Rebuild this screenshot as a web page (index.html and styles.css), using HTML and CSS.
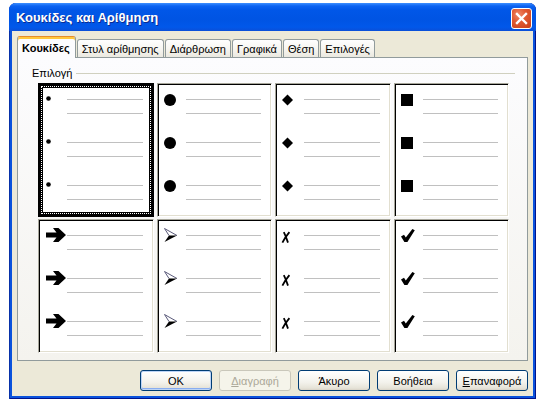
FILE: index.html
```html
<!DOCTYPE html>
<html lang="el">
<head>
<meta charset="utf-8">
<title>Κουκίδες και Αρίθμηση</title>
<link rel="stylesheet" href="styles.css">
</head>
<body>
<div class="window">
  <div class="titlebar">
    <span class="title">Κουκίδες και Αρίθμηση</span>
    <span class="close"><svg width="19" height="19" viewBox="0 0 19 19"><path d="M5 5 L14 14 M14 5 L5 14" stroke="#fff" stroke-width="2.4" stroke-linecap="square"/></svg></span>
  </div>
  <div class="client">
    <div class="tabs">
      <div class="tab active">Κουκίδες</div>
      <div class="tab">Στυλ αρίθμησης</div>
      <div class="tab">Διάρθρωση</div>
      <div class="tab">Γραφικά</div>
      <div class="tab">Θέση</div>
      <div class="tab">Επιλογές</div>
    </div>
    <div class="panel">
      <div class="group-head"><span class="group-label">Επιλογή</span><span class="rule"></span></div>
      <div class="grid">
        <!-- row 1 -->
        <div class="cell selected">
          <div class="g"><div class="mk"><svg width="22" height="14" viewBox="0 0 22 14"><circle cx="3.5" cy="6.5" r="2.3" fill="#000"/></svg></div><div class="ls"><i></i><i></i></div></div>
          <div class="g"><div class="mk"><svg width="22" height="14" viewBox="0 0 22 14"><circle cx="3.5" cy="6.5" r="2.3" fill="#000"/></svg></div><div class="ls"><i></i><i></i></div></div>
          <div class="g"><div class="mk"><svg width="22" height="14" viewBox="0 0 22 14"><circle cx="3.5" cy="6.5" r="2.3" fill="#000"/></svg></div><div class="ls"><i></i><i></i></div></div>
        </div>
        <div class="cell">
          <div class="g"><div class="mk"><svg width="22" height="14" viewBox="0 0 22 14"><circle cx="6" cy="8" r="6" fill="#000"/></svg></div><div class="ls"><i></i><i></i></div></div>
          <div class="g"><div class="mk"><svg width="22" height="14" viewBox="0 0 22 14"><circle cx="6" cy="8" r="6" fill="#000"/></svg></div><div class="ls"><i></i><i></i></div></div>
          <div class="g"><div class="mk"><svg width="22" height="14" viewBox="0 0 22 14"><circle cx="6" cy="8" r="6" fill="#000"/></svg></div><div class="ls"><i></i><i></i></div></div>
        </div>
        <div class="cell">
          <div class="g"><div class="mk"><svg width="22" height="14" viewBox="0 0 22 14"><polygon points="5.5,2.5 11,8 5.5,13.5 0,8" fill="#000"/></svg></div><div class="ls"><i></i><i></i></div></div>
          <div class="g"><div class="mk"><svg width="22" height="14" viewBox="0 0 22 14"><polygon points="5.5,2.5 11,8 5.5,13.5 0,8" fill="#000"/></svg></div><div class="ls"><i></i><i></i></div></div>
          <div class="g"><div class="mk"><svg width="22" height="14" viewBox="0 0 22 14"><polygon points="5.5,2.5 11,8 5.5,13.5 0,8" fill="#000"/></svg></div><div class="ls"><i></i><i></i></div></div>
        </div>
        <div class="cell">
          <div class="g"><div class="mk"><svg width="22" height="14" viewBox="0 0 22 14"><rect x="0" y="2" width="12" height="12" fill="#000"/></svg></div><div class="ls"><i></i><i></i></div></div>
          <div class="g"><div class="mk"><svg width="22" height="14" viewBox="0 0 22 14"><rect x="0" y="2" width="12" height="12" fill="#000"/></svg></div><div class="ls"><i></i><i></i></div></div>
          <div class="g"><div class="mk"><svg width="22" height="14" viewBox="0 0 22 14"><rect x="0" y="2" width="12" height="12" fill="#000"/></svg></div><div class="ls"><i></i><i></i></div></div>
        </div>
        <!-- row 2 -->
        <div class="cell">
          <div class="g"><div class="mk"><svg width="22" height="14" viewBox="0 0 22 14"><polygon points="1,4.5 11.5,4.5 8,0 13.5,0 21,7 13.5,14 8,14 11.5,9.5 1,9.5" fill="#000"/></svg></div><div class="ls"><i></i><i></i></div></div>
          <div class="g"><div class="mk"><svg width="22" height="14" viewBox="0 0 22 14"><polygon points="1,4.5 11.5,4.5 8,0 13.5,0 21,7 13.5,14 8,14 11.5,9.5 1,9.5" fill="#000"/></svg></div><div class="ls"><i></i><i></i></div></div>
          <div class="g"><div class="mk"><svg width="22" height="14" viewBox="0 0 22 14"><polygon points="1,4.5 11.5,4.5 8,0 13.5,0 21,7 13.5,14 8,14 11.5,9.5 1,9.5" fill="#000"/></svg></div><div class="ls"><i></i><i></i></div></div>
        </div>
        <div class="cell">
          <div class="g"><div class="mk"><svg width="22" height="14" viewBox="0 0 22 14"><polyline points="5,7.5 0.5,0.5 13,7.5" fill="none" stroke="#5a5a7a" stroke-width="1"/><polygon points="5,7.5 13,7.5 0.5,14" fill="#000"/></svg></div><div class="ls"><i></i><i></i></div></div>
          <div class="g"><div class="mk"><svg width="22" height="14" viewBox="0 0 22 14"><polyline points="5,7.5 0.5,0.5 13,7.5" fill="none" stroke="#5a5a7a" stroke-width="1"/><polygon points="5,7.5 13,7.5 0.5,14" fill="#000"/></svg></div><div class="ls"><i></i><i></i></div></div>
          <div class="g"><div class="mk"><svg width="22" height="14" viewBox="0 0 22 14"><polyline points="5,7.5 0.5,0.5 13,7.5" fill="none" stroke="#5a5a7a" stroke-width="1"/><polygon points="5,7.5 13,7.5 0.5,14" fill="#000"/></svg></div><div class="ls"><i></i><i></i></div></div>
        </div>
        <div class="cell">
          <div class="g"><div class="mk"><svg class="ovf" width="22" height="14" viewBox="0 0 22 14"><path d="M1.8 4.2 Q3.8 8 6 14.6 M7.4 4.2 Q3.4 9 0.4 14.6" fill="none" stroke="#000" stroke-width="1.8"/></svg></div><div class="ls"><i></i><i></i></div></div>
          <div class="g"><div class="mk"><svg class="ovf" width="22" height="14" viewBox="0 0 22 14"><path d="M1.8 4.2 Q3.8 8 6 14.6 M7.4 4.2 Q3.4 9 0.4 14.6" fill="none" stroke="#000" stroke-width="1.8"/></svg></div><div class="ls"><i></i><i></i></div></div>
          <div class="g"><div class="mk"><svg class="ovf" width="22" height="14" viewBox="0 0 22 14"><path d="M1.8 4.2 Q3.8 8 6 14.6 M7.4 4.2 Q3.4 9 0.4 14.6" fill="none" stroke="#000" stroke-width="1.8"/></svg></div><div class="ls"><i></i><i></i></div></div>
        </div>
        <div class="cell">
          <div class="g"><div class="mk"><svg class="ovf" width="22" height="14" viewBox="0 0 22 14"><polygon points="0,8.6 3,6.8 4.8,9.4 11.4,1 13.8,2.2 6.4,14 3.4,14" fill="#000"/></svg></div><div class="ls"><i></i><i></i></div></div>
          <div class="g"><div class="mk"><svg class="ovf" width="22" height="14" viewBox="0 0 22 14"><polygon points="0,8.6 3,6.8 4.8,9.4 11.4,1 13.8,2.2 6.4,14 3.4,14" fill="#000"/></svg></div><div class="ls"><i></i><i></i></div></div>
          <div class="g"><div class="mk"><svg class="ovf" width="22" height="14" viewBox="0 0 22 14"><polygon points="0,8.6 3,6.8 4.8,9.4 11.4,1 13.8,2.2 6.4,14 3.4,14" fill="#000"/></svg></div><div class="ls"><i></i><i></i></div></div>
        </div>
      </div>
    </div>
    <div class="buttons">
      <div class="btn default">OK</div>
      <div class="btn disabled"><u>Δ</u>ιαγραφή</div>
      <div class="btn">Άκυρο</div>
      <div class="btn">Βοήθεια</div>
      <div class="btn"><u>Ε</u>παναφορά</div>
    </div>
  </div>
</div>
</body>
</html>
```

FILE: styles.css
```css
html, body {
  margin: 0;
  padding: 0;
  background: #ffffff;
}
body {
  padding: 3px 0 0 9px;
  font-family: "Liberation Sans", Arial, sans-serif;
  font-size: 11px;
  color: #000;
}
.window {
  width: 527px;
  height: 396px;
  box-sizing: border-box;
  background: #0a52dc;
  border-radius: 7px 7px 0 0;
  display: flex;
  flex-direction: column;
  box-shadow: inset 1px 0 0 #0831a8, inset -1px 0 0 #00138c, inset 0 -1px 0 #00138c;
}
.titlebar {
  height: 28px;
  flex: none;
  border-radius: 7px 7px 0 0;
  background: linear-gradient(#3d8fff 0, #0c63f2 3px, #0157e8 7px, #0054e3 16px, #0158ea 24px, #0a4fd8 28px);
  display: flex;
  align-items: center;
  padding: 0 3px 0 7px;
}
.title {
  flex: 1;
  color: #fff;
  font-family: "Liberation Sans", Arial, sans-serif;
  font-size: 13px;
  font-weight: bold;
  text-shadow: 1px 1px 0 #0a2a90;
  padding-top: 1px;
}
.close {
  width: 21px;
  height: 21px;
  box-sizing: border-box;
  border: 1px solid #fff;
  border-radius: 3px;
  background: radial-gradient(circle at 35% 30%, #f08a6a 0, #e15a33 40%, #c83f18 100%);
  display: flex;
  align-items: center;
  justify-content: center;
  margin-top: 3px;
  margin-right: 1px;
}
.client {
  flex: 1;
  margin: 0 3px 3px 3px;
  background: #ece9d8;
  padding: 5px;
  display: flex;
  flex-direction: column;
}
.tabs {
  height: 21px;
  display: flex;
  align-items: flex-end;
  gap: 0;
  flex: none;
}
.tab {
  height: 18px;
  box-sizing: border-box;
  border: 1px solid #919b9c;
  border-bottom: none;
  border-radius: 3px 3px 0 0;
  background: linear-gradient(#fefefe, #f7f6f1 50%, #ebe9e0);
  padding: 0 4px;
  margin-left: 1px;
  display: flex;
  align-items: center;
  white-space: nowrap;
}
.tab.active {
  height: 22px;
  margin-left: 0;
  margin-bottom: -1px;
  position: relative;
  z-index: 1;
  background: #fcfcfe;
  border-top-color: #e68b2c;
  box-shadow: inset 0 2px 0 #ffc83c;
  font-weight: bold;
  padding: 1px 5px 0 4px;
}
.panel {
  height: 304px;
  box-sizing: border-box;
  border: 1px solid #919b9c;
  background: linear-gradient(#fcfcfe, #f4f3ee);
  flex: none;
}
.group-head {
  height: 16px;
  margin: 7px 12px 0 14px;
  display: flex;
  align-items: center;
}
.group-label {
  margin-right: 4px;
}
.rule {
  flex: 1;
  height: 1px;
  background: #d0d0bf;
}
.grid {
  margin: 2px 0 0 20px;
  width: 471px;
  display: grid;
  grid-template-columns: repeat(4, 1fr);
  grid-auto-rows: 134px;
  gap: 2px 3px;
}
.cell {
  background: #fff;
  box-sizing: border-box;
  border: 1px solid;
  border-color: #a7a69a #fff #fff #a7a69a;
  box-shadow: inset 1px 1px 0 #000, inset -1px -1px 0 #e2dfd0;
  padding: 14px 10px 0 6px;
}
.cell.selected {
  border-color: #000;
  box-shadow: inset 0 0 0 4px #000;
  outline: 1px dotted #fff;
  outline-offset: -4px;
}
.g {
  display: flex;
  height: 43px;
}
.mk {
  width: 22px;
  height: 14px;
  margin-top: -6px;
  flex: none;
  display: flex;
}
.mk svg {
  display: block;
}
.mk svg.ovf {
  overflow: visible;
}
.ls {
  flex: 1;
  display: flex;
  flex-direction: column;
  gap: 13px;
  padding-top: 1px;
}
.ls i {
  display: block;
  height: 1px;
  background: #c0c0c0;
}
.buttons {
  margin-top: 9px;
  height: 21px;
  display: flex;
  justify-content: flex-end;
  gap: 7px;
  flex: none;
}
.btn {
  width: 72px;
  height: 21px;
  box-sizing: border-box;
  border: 1px solid #003c74;
  border-radius: 3px;
  background: linear-gradient(#ffffff, #f3f2ec 60%, #e6e3d8 90%, #d8d3c6);
  display: flex;
  align-items: center;
  justify-content: center;
  white-space: nowrap;
}
.btn.default {
  box-shadow: inset 0 0 0 1px #bcd4f6, inset 0 -1px 0 1px #89adf0;
}
.btn.disabled {
  border-color: #c9c7ba;
  background: #f5f4ea;
  color: #aca899;
}
```
